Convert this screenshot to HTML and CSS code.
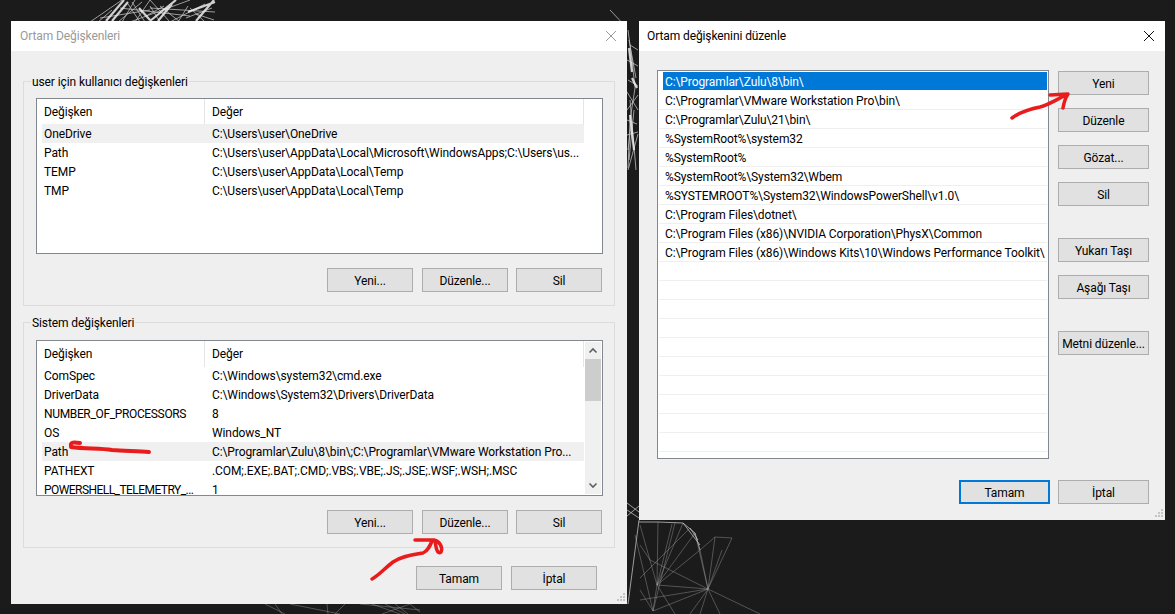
FILE: index.html
```html
<!DOCTYPE html>
<html lang="tr">
<head>
<meta charset="utf-8">
<title>Ortam Değişkenleri</title>
<link rel="stylesheet" href="styles.css">
</head>
<body>
<div class="desktop">
  <svg class="wallpaper" viewBox="0 0 1175 614" width="1175" height="614" aria-hidden="true">
    <g class="wire-mid">
      <path d="M90 22L122 0M122 22L135 0M135 22L150 0M140 22L128 4M170 22L150 0M170 22L205 4M180 22L160 6M205 22L190 8M100 18L150 10M120 8L190 16M130 22L190 0M150 8L215 12M118 22L142 2M145 22L132 2M146 16L164 6M178 22L188 6M186 18L212 8M196 14L214 20M98 22L112 10M160 22L150 6"/>
      <path d="M610 10L627 28M628 30L632 60L635 88L630 120L628 168M630 45L638 50M628 80L638 86M627 110L638 95M627 135L638 132M628 170L638 134M630 100L636 170M627 60L638 66M627 92L638 110M629 40L636 78M627 120L637 124M631 125L628 150M634 110L629 160"/>
    </g>
    <g class="wire-bright">
      <path d="M106 21L124 0M112 21L128 2M150 21L176 0M158 21L172 4M196 21L214 0M188 12L215 2M139 8L150 20M629 48L632 72M632 78L637 88M630 115L634 150"/>
    </g>
    <g class="wire-mid">
      <path d="M628 604L639 520M639 522L658 522L683 523L695 533L700 550M683 523L700 545M690 528L698 540M627 510L639 518M627 503L639 512M627 516L639 506"/>
    </g>
    <g class="wire-faint">
      <path d="M708 589L700 550M708 589L715 537M708 589L732 538M715 537L732 538M708 589L722 550M708 589L695 533M700 550L715 537"/>
      <path d="M657 585L640 525M657 585L658 522M657 585L683 523M657 585L672 524M657 585L695 533M657 585L700 550M657 585L708 589M653 611L708 589M653 611L657 585M653 611L635 535M653 611L675 523M653 611L640 590M708 589L760 614M708 589L690 614M708 589L720 614M708 589L700 614M708 589L650 560M650 560L640 545M640 600L708 589M675 614L657 585M640 578L690 528"/>
      <path d="M265 604L285 614M275 604L282 614M290 604L340 614M327 604L328 614M345 604L335 614M360 604L420 610M372 604L400 614M405 614L385 604M382 614L410 604M395 604L408 614M410 604L420 612"/>
    </g>
  </svg>

  <section class="window window-env">
    <header class="titlebar inactive">
      <span>Ortam Değişkenleri</span>
      <svg class="close" viewBox="0 0 12 12" width="12" height="12"><path d="M1 1L11 11M11 1L1 11"/></svg>
    </header>
    <div class="env-body">
      <div class="group">
        <span class="legend">user için kullanıcı değişkenleri</span>
        <div class="list">
          <div class="table">
            <div class="thead"><span>Değişken</span><span>Değer</span></div>
            <div class="row hover"><span>OneDrive</span><span>C:\Users\user\OneDrive</span></div>
            <div class="row"><span>Path</span><span>C:\Users\user\AppData\Local\Microsoft\WindowsApps;C:\Users\us...</span></div>
            <div class="row"><span>TEMP</span><span>C:\Users\user\AppData\Local\Temp</span></div>
            <div class="row"><span>TMP</span><span>C:\Users\user\AppData\Local\Temp</span></div>
          </div>
        </div>
        <div class="actions">
          <button class="btn">Yeni...</button>
          <button class="btn">Düzenle...</button>
          <button class="btn">Sil</button>
        </div>
      </div>
      <div class="group">
        <span class="legend">Sistem değişkenleri</span>
        <div class="list">
          <div class="table">
            <div class="thead"><span>Değişken</span><span>Değer</span></div>
            <div class="row"><span>ComSpec</span><span>C:\Windows\system32\cmd.exe</span></div>
            <div class="row"><span>DriverData</span><span>C:\Windows\System32\Drivers\DriverData</span></div>
            <div class="row"><span class="caps">NUMBER_OF_PROCESSORS</span><span>8</span></div>
            <div class="row"><span>OS</span><span>Windows_NT</span></div>
            <div class="row hover"><span>Path</span><span>C:\Programlar\Zulu\8\bin\;C:\Programlar\VMware Workstation Pro...</span></div>
            <div class="row"><span>PATHEXT</span><span>.COM;.EXE;.BAT;.CMD;.VBS;.VBE;.JS;.JSE;.WSF;.WSH;.MSC</span></div>
            <div class="row"><span class="caps-tight">POWERSHELL_TELEMETRY_...</span><span>1</span></div>
          </div>
          <div class="scrollbar">
            <svg viewBox="0 0 10 8" width="10" height="8"><path d="M1.5 6L5 2.5L8.500 6"/></svg>
            <div class="track"><div class="thumb"></div></div>
            <svg viewBox="0 0 10 8" width="10" height="8"><path d="M1.500 2L5 5.500L8.500 2"/></svg>
          </div>
        </div>
        <div class="actions">
          <button class="btn">Yeni...</button>
          <button class="btn">Düzenle...</button>
          <button class="btn">Sil</button>
        </div>
      </div>
      <div class="footer footer-env">
        <button class="btn">Tamam</button>
        <button class="btn">İptal</button>
      </div>
    </div>
    <svg class="grip" viewBox="0 0 9 9" width="9" height="9"><path d="M7 0h2v2H7zM4 3h2v2H4zM7 3h2v2H7zM1 6h2v2H1zM4 6h2v2H4zM7 6h2v2H7z"/></svg>
  </section>

  <section class="window window-edit">
    <header class="titlebar">
      <span>Ortam değişkenini düzenle</span>
      <svg class="close" viewBox="0 0 12 12" width="12" height="12"><path d="M1 1L11 11M11 1L1 11"/></svg>
    </header>
    <div class="edit-body">
      <div class="edit-main">
        <div class="pathlist">
          <div class="pathrow selected">C:\Programlar\Zulu\8\bin\</div>
          <div class="pathrow">C:\Programlar\VMware Workstation Pro\bin\</div>
          <div class="pathrow">C:\Programlar\Zulu\21\bin\</div>
          <div class="pathrow">%SystemRoot%\system32</div>
          <div class="pathrow">%SystemRoot%</div>
          <div class="pathrow">%SystemRoot%\System32\Wbem</div>
          <div class="pathrow">%SYSTEMROOT%\System32\WindowsPowerShell\v1.0\</div>
          <div class="pathrow">C:\Program Files\dotnet\</div>
          <div class="pathrow">C:\Program Files (x86)\NVIDIA Corporation\PhysX\Common</div>
          <div class="pathrow">C:\Program Files (x86)\Windows Kits\10\Windows Performance Toolkit\</div>
          <div class="pathrow"></div><div class="pathrow"></div><div class="pathrow"></div>
          <div class="pathrow"></div><div class="pathrow"></div><div class="pathrow"></div>
          <div class="pathrow"></div><div class="pathrow"></div><div class="pathrow"></div>
          <div class="pathrow"></div>
        </div>
        <div class="sidebtns">
          <button class="btn wide">Yeni</button>
          <button class="btn wide">Düzenle</button>
          <button class="btn wide">Gözat...</button>
          <button class="btn wide">Sil</button>
          <button class="btn wide sep">Yukarı Taşı</button>
          <button class="btn wide">Aşağı Taşı</button>
          <button class="btn wide sep">Metni düzenle...</button>
        </div>
      </div>
      <div class="footer footer-edit">
        <button class="btn wide default">Tamam</button>
        <button class="btn wide">İptal</button>
      </div>
    </div>
    <svg class="grip" viewBox="0 0 9 9" width="9" height="9"><path d="M7 0h2v2H7zM4 3h2v2H4zM7 3h2v2H7zM1 6h2v2H1zM4 6h2v2H4zM7 6h2v2H7z"/></svg>
  </section>

  <svg class="ink" viewBox="0 0 1175 614" width="1175" height="614" aria-hidden="true">
    <path class="thick" d="M71 446C70 442 74 442 80 443M71 447C85 449 100 448 112 450C125 451 138 451 149 452"/>
    <path d="M372 579C378 576 385 568 393 562C402 556 412 555 423 553C428 551 430 546 432 541M415 540L434 540C440 541 443 548 441 552C437 555 436 547 435 541"/>
    <path d="M1012 118C1020 112 1030 109 1040 107C1048 105 1056 100 1064 96M1050 95L1068 94C1066 97 1064 102 1063 108"/>
  </svg>
</div>
</body>
</html>
```
FILE: styles.css
```css
* { box-sizing: border-box; }
html, body { margin: 0; padding: 0; }
body { background: #1b1b1b; font-family: Roboto, "Open Sans", sans-serif; font-size: 12px; letter-spacing: -.1px; color: #000; overflow: hidden; }
.desktop { position: relative; width: 1175px; height: 614px; overflow: hidden; background: #1b1b1b; }

.wallpaper, .ink { position: absolute; left: 0; top: 0; }
.wallpaper { filter: blur(.4px); }
.wallpaper path { fill: none; }
.wire-bright path { stroke: #f0f0f0; stroke-width: 2.2; opacity: .85; }
.wire-mid path { stroke: #c8c8c8; stroke-width: 1; opacity: .75; }
.wire-faint path { stroke: #aaa; stroke-width: .8; opacity: .5; }
.ink { pointer-events: none; }
.ink path { fill: none; stroke: #e81c1c; stroke-width: 3.5; stroke-linecap: round; stroke-linejoin: round; }
.ink .thick { stroke-width: 4; }

.window { position: absolute; top: 21px; background: #efefef; display: flex; flex-direction: column; }
.window-env { left: 11px; width: 616px; height: 583px; }
.window-edit { left: 639px; width: 526px; height: 499px; }

.titlebar { height: 30px; flex: none; background: #fff; display: flex; align-items: center; justify-content: space-between; padding: 0 10px 0 8px; }
.window-env .titlebar { padding-left: 9px; padding-right: 10px; }
.titlebar.inactive { color: #999; }
.close path { fill: none; stroke: #111; stroke-width: 1; }
.inactive .close path { stroke: #999; }

.env-body { padding: 30px 12px 0; display: flex; flex-direction: column; gap: 16px; }
.group { border: 1px solid #dcdcdc; padding: 0 11px 13px 12px; display: flex; flex-direction: column; }
.legend { align-self: flex-start; margin: -9px 0 9px -5px; padding: 1px 1px 0; line-height: 17px; background: #efefef; height: 16px; }
.group + .group .legend { margin-bottom: 10px; }

.list { height: 156px; border: 1px solid #828790; background: #fff; padding-left: 5px; display: flex; overflow: hidden; flex: none; }
.table { width: 542px; flex: none; }
.thead, .row { display: grid; grid-template-columns: 163px 379px; white-space: nowrap; }
.thead { height: 25px; line-height: 25px; }
.thead span { padding: 1px 0 0 2px; border-right: 1px solid #e5e5e5; }
.thead span:last-child { padding-left: 7px; }
.row { height: 19px; line-height: 18px; }
.row span { padding: 1px 0 0 2px; overflow: hidden; }
.row span:last-child { padding-left: 7px; }
.row.hover { background: #f0f0f0; }
.row .caps { letter-spacing: -.35px; }
.row .caps-tight { letter-spacing: -.55px; }

.scrollbar { width: 16px; margin: 1px 0 1px 1px; background: #f0f0f0; display: flex; flex-direction: column; align-items: center; flex: none; }
.scrollbar svg { flex: none; height: 17px; }
.scrollbar path { fill: none; stroke: #606060; stroke-width: 1.6; }
.track { flex: 1; align-self: stretch; }
.thumb { height: 42px; background: #cdcdcd; }

.actions { display: flex; justify-content: flex-end; gap: 8px; margin-top: 14px; padding-right: 1px; }
.actions .btn:nth-child(2) { margin-left: 1px; }

.btn { height: 24px; width: 86px; padding: 1px 0 0; background: #e1e1e1; border: 1px solid #adadad; border-radius: 0; font: inherit; letter-spacing: inherit; color: #000; text-align: center; white-space: nowrap; }
.btn.wide { width: 91px; }
.btn.default { border: 2px solid #0078d7; }

.footer { display: flex; justify-content: flex-end; }
.footer-env { gap: 9px; margin-top: 2px; padding-right: 18px; }

.edit-body { padding: 19px 16px 0 18px; display: flex; flex-direction: column; }
.edit-main { display: flex; gap: 9px; align-items: flex-start; }
.pathlist { width: 392px; height: 389px; flex: none; border: 1px solid #828790; background: #fff; padding: 1px 1px 0; overflow: hidden; }
.pathrow { height: 19px; line-height: 18px; padding: 1px 0 0 6px; border-bottom: 1px solid #efefef; white-space: nowrap; }
.pathrow.selected { background: #0078d7; color: #fff; margin-left: 4px; padding-left: 2px; border-bottom-color: #fff; }
.sidebtns { display: flex; flex-direction: column; padding-top: 1px; gap: 13px; }
.sidebtns .sep { margin-top: 19px; }
.footer-edit { gap: 8px; margin-top: 21px; }

.grip { position: absolute; right: 2px; bottom: 2px; }
.grip path { fill: #c4c4c4; }
```
